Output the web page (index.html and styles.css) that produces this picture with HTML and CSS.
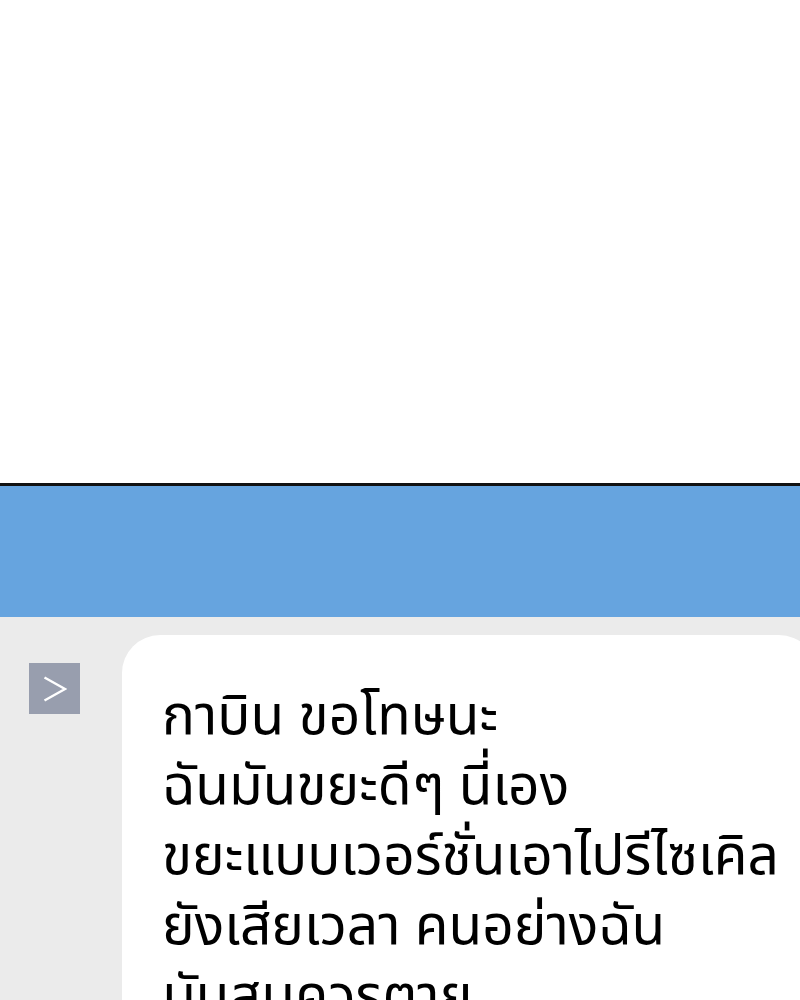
FILE: index.html
```html
<!DOCTYPE html>
<html>
<head>
    <title>Chat</title>
    <link rel="stylesheet" href="styles.css">
</head>
<body>
    <div class="blank"></div>
    <div class="banner"></div>
    <div class="chat">
        <div class="toggle">
            <svg width="24" height="26" viewBox="0 0 24 26">
                <polyline points="1.5,1.5 22,13 1.5,24.5" fill="none" stroke="#fff" stroke-width="2.4"/>
            </svg>
        </div>
        <div class="bubble">
            <p>กาบิน ขอโทษนะ<br>
            ฉันมันขยะดีๆ นี่เอง<br>
            ขยะแบบเวอร์ชั่นเอาไปรีไซเคิล<br>
            ยังเสียเวลา คนอย่างฉัน<br>
            มันสมควรตาย</p>
        </div>
    </div>
</body>
</html>
```

FILE: styles.css
```css
body {
    margin: 0;
    font-family: "Noto Sans Thai", "Noto Sans", sans-serif;
    background-color: #ebebeb;
    overflow: hidden;
}
.blank {
    height: 483px;
    background-color: #fff;
    border-bottom: 3px solid #111;
}
.banner {
    height: 131px;
    background-color: #66a4df;
}
.chat {
    display: flex;
    align-items: flex-start;
    padding-top: 18px;
    height: 400px;
}
.toggle {
    display: flex;
    justify-content: center;
    align-items: center;
    width: 51px;
    height: 51px;
    margin: 28px 0 0 29px;
    background-color: #989eae;
    flex-shrink: 0;
}
.bubble {
    flex-shrink: 0;
    width: 695px;
    height: 500px;
    margin-left: 42px;
    background-color: #fff;
    border-radius: 38px;
}
.bubble p {
    margin: 0;
    padding: 48px 0 0 40px;
    font-size: 55px;
    line-height: 70px;
    color: #000;
}
```
